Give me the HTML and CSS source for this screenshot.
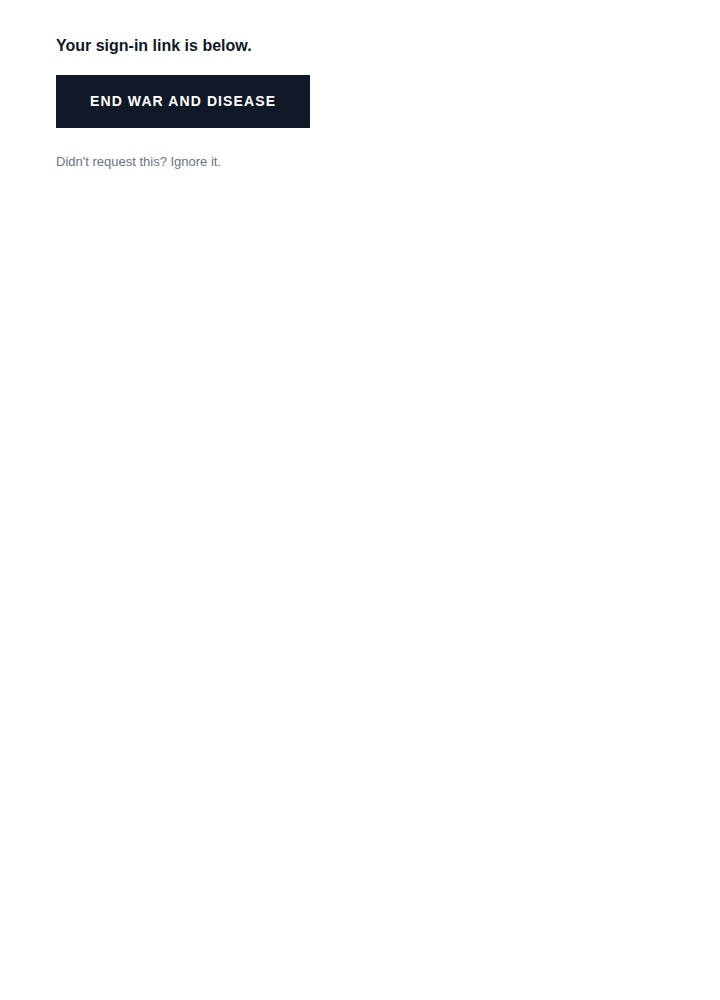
FILE: index.html
```html
<!DOCTYPE html>
<html>
<head>
<meta charset="utf-8">
<link rel="stylesheet" href="styles.css">
</head>
<body>
<div class="wrap">
  <h1 class="title">Your sign-in link is below.</h1>
  <a class="btn" href="#">END WAR AND DISEASE</a>
  <p class="note">Didn't request this? Ignore it.</p>
</div>
</body>
</html>
```
FILE: styles.css
```css
html, body {
  margin: 0;
  padding: 0;
  background: #ffffff;
}
.wrap {
  padding: 35px 56px;
  font-family: "Liberation Sans", Arial, sans-serif;
  display: flex;
  flex-direction: column;
  align-items: flex-start;
}
.title {
  margin: 0;
  font-size: 16px;
  line-height: 22px;
  font-weight: 700;
  color: #111827;
}
.btn {
  margin-top: 18px;
  display: inline-block;
  background: #111827;
  color: #ffffff;
  text-decoration: none;
  font-size: 14px;
  font-weight: 700;
  letter-spacing: 1.1px;
  line-height: 17px;
  padding: 18px 34px;
}
.note {
  margin: 24px 0 0;
  font-size: 13px;
  line-height: 20px;
  color: #6b7280;
}
```
